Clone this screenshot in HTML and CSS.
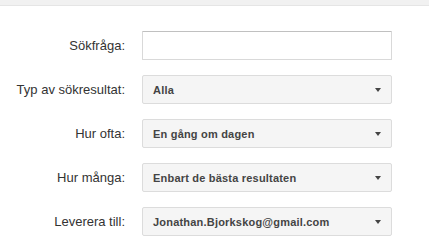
FILE: index.html
```html
<!DOCTYPE html>
<html lang="sv">
<head>
  <meta charset="UTF-8" />
  <meta name="viewport" content="width=device-width, initial-scale=1.0" />
  <title>Bevakning</title>
  <link rel="stylesheet" href="styles.css">
</head>
<body>
  <div class="topbar"></div>

  <div class="form">
    <label class="label" for="q">Sökfråga:</label>
    <input class="text-input" id="q" type="text" value="">

    <div class="label">Typ av sökresultat:</div>
    <div class="select"><span>Alla</span><i class="arrow"></i></div>

    <div class="label">Hur ofta:</div>
    <div class="select"><span>En gång om dagen</span><i class="arrow"></i></div>

    <div class="label">Hur många:</div>
    <div class="select"><span>Enbart de bästa resultaten</span><i class="arrow"></i></div>

    <div class="label">Leverera till:</div>
    <div class="select"><span>Jonathan.Bjorkskog@gmail.com</span><i class="arrow"></i></div>
  </div>
</body>
</html>
```

FILE: styles.css
```css
body {
  margin: 0;
  font-family: Arial, 'Liberation Sans', sans-serif;
  background: #fff;
}
.topbar {
  height: 5px;
  background: #f1f1f1;
  border-bottom: 1px solid #e5e5e5;
}
.form {
  display: grid;
  grid-template-columns: 125px 250px;
  grid-auto-rows: 29px;
  column-gap: 17px;
  row-gap: 15px;
  padding-top: 25px;
}
.label {
  display: flex;
  align-items: center;
  justify-content: flex-end;
  font-size: 13px;
  color: #333;
}
.text-input {
  box-sizing: border-box;
  width: 100%;
  height: 29px;
  margin: 0;
  padding: 0 8px;
  border: 1px solid #d9d9d9;
  border-top-color: #c0c0c0;
  border-radius: 1px;
  font-size: 13px;
  outline: none;
}
.select {
  box-sizing: border-box;
  display: flex;
  align-items: center;
  justify-content: space-between;
  padding: 0 10px;
  background: #f5f5f5;
  border: 1px solid #dcdcdc;
  border-radius: 2px;
  font-size: 11px;
  font-weight: bold;
  letter-spacing: 0.2px;
  color: #444;
}
.arrow {
  width: 0;
  height: 0;
  border-left: 3.5px solid transparent;
  border-right: 3.5px solid transparent;
  border-top: 4px solid #444;
}
```
